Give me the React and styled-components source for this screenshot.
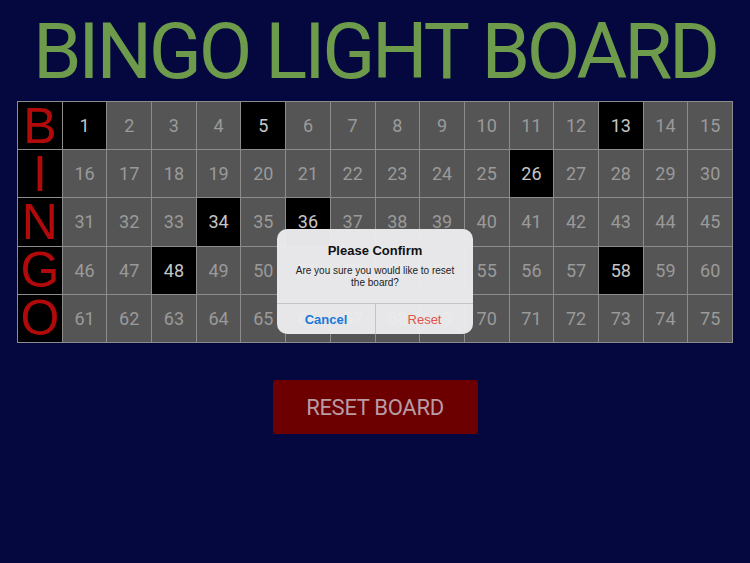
import React, { useState } from "react";
import styled, { createGlobalStyle } from "styled-components";

const GlobalStyle = createGlobalStyle`
  html, body {
    margin: 0;
    padding: 0;
    background: #04083f;
  }
  * {
    box-sizing: border-box;
  }
`;

const Page = styled.div`
  width: 750px;
  height: 563px;
  background: #04083f;
  display: flex;
  flex-direction: column;
  align-items: center;
  font-family: Roboto, "Liberation Sans", sans-serif;
  overflow: hidden;
`;

const Title = styled.h1`
  margin: 0;
  padding-top: 13px;
  height: 101px;
  font-family: Roboto, "Liberation Sans", sans-serif;
  font-weight: 400;
  font-size: 78px;
  line-height: 1;
  letter-spacing: -3.2px;
  color: #6d9a4b;
`;

const BoardWrap = styled.div`
  position: relative;
`;

const Board = styled.div`
  width: 716px;
  height: 242px;
  display: grid;
  grid-template-columns: repeat(16, minmax(0, 1fr));
  grid-template-rows: repeat(5, minmax(0, 1fr));
  gap: 1px;
  padding: 1px;
  background: #8c8c8c;
`;

const Letter = styled.div`
  background: #000;
  color: #b20a0a;
  display: flex;
  align-items: center;
  justify-content: center;
  font-family: "Liberation Sans", Arial, sans-serif;
  font-size: 50px;
  line-height: 1;
`;

const Cell = styled.div`
  background: ${(p) => (p.$called ? "#000" : "#555555")};
  color: ${(p) => (p.$called ? "#c6c6c6" : "#9a9a9a")};
  display: flex;
  align-items: center;
  justify-content: center;
  font-size: 18px;
  cursor: pointer;
`;

const Overlay = styled.div`
  position: absolute;
  left: 260px;
  top: 128px;
  width: 196px;
  border-radius: 10px;
  background: rgba(236, 236, 238, 0.97);
  font-family: "Liberation Sans", Arial, sans-serif;
  text-align: center;
  overflow: hidden;
`;

const AlertBody = styled.div`
  padding: 14px 14px 14px;
`;

const AlertTitle = styled.div`
  font-size: 13px;
  font-weight: 700;
  color: #111;
  margin-bottom: 7px;
`;

const AlertText = styled.div`
  font-size: 10px;
  line-height: 12px;
  color: #222;
`;

const AlertActions = styled.div`
  display: grid;
  grid-template-columns: 1fr 1fr;
  border-top: 1px solid #c4c4c8;
`;

const AlertButton = styled.button`
  height: 30px;
  border: 0;
  background: transparent;
  font-family: "Liberation Sans", Arial, sans-serif;
  font-size: 13px;
  font-weight: ${(p) => (p.$bold ? 700 : 400)};
  color: ${(p) => (p.$danger ? "#e0534c" : "#1a78d8")};
  & + & {
    border-left: 1px solid #c4c4c8;
  }
`;

const ResetButton = styled.button`
  margin-top: 37px;
  width: 205px;
  height: 54px;
  border: 0;
  border-radius: 3px;
  background: #6c0000;
  color: #b89ca4;
  font-family: Roboto, "Liberation Sans", sans-serif;
  font-size: 22px;
  letter-spacing: -0.3px;
`;

const LETTERS = ["B", "I", "N", "G", "O"];

export default function App() {
  const [called, setCalled] = useState([1, 5, 13, 26, 34, 36, 48, 58]);
  const [confirming, setConfirming] = useState(true);

  const toggle = (n) =>
    setCalled((prev) =>
      prev.includes(n) ? prev.filter((x) => x !== n) : [...prev, n]
    );

  return (
    <Page>
      <GlobalStyle />
      <Title>BINGO LIGHT BOARD</Title>
      <BoardWrap>
        <Board>
          {LETTERS.map((letter, row) => (
            <React.Fragment key={letter}>
              <Letter>{letter}</Letter>
              {Array.from({ length: 15 }, (_, i) => {
                const n = row * 15 + i + 1;
                return (
                  <Cell key={n} $called={called.includes(n)} onClick={() => toggle(n)}>
                    {n}
                  </Cell>
                );
              })}
            </React.Fragment>
          ))}
        </Board>
        {confirming && (
          <Overlay>
            <AlertBody>
              <AlertTitle>Please Confirm</AlertTitle>
              <AlertText>
                Are you sure you would like to reset
                <br />
                the board?
              </AlertText>
            </AlertBody>
            <AlertActions>
              <AlertButton $bold onClick={() => setConfirming(false)}>
                Cancel
              </AlertButton>
              <AlertButton
                $danger
                onClick={() => {
                  setCalled([]);
                  setConfirming(false);
                }}
              >
                Reset
              </AlertButton>
            </AlertActions>
          </Overlay>
        )}
      </BoardWrap>
      <ResetButton onClick={() => setConfirming(true)}>RESET BOARD</ResetButton>
    </Page>
  );
}
